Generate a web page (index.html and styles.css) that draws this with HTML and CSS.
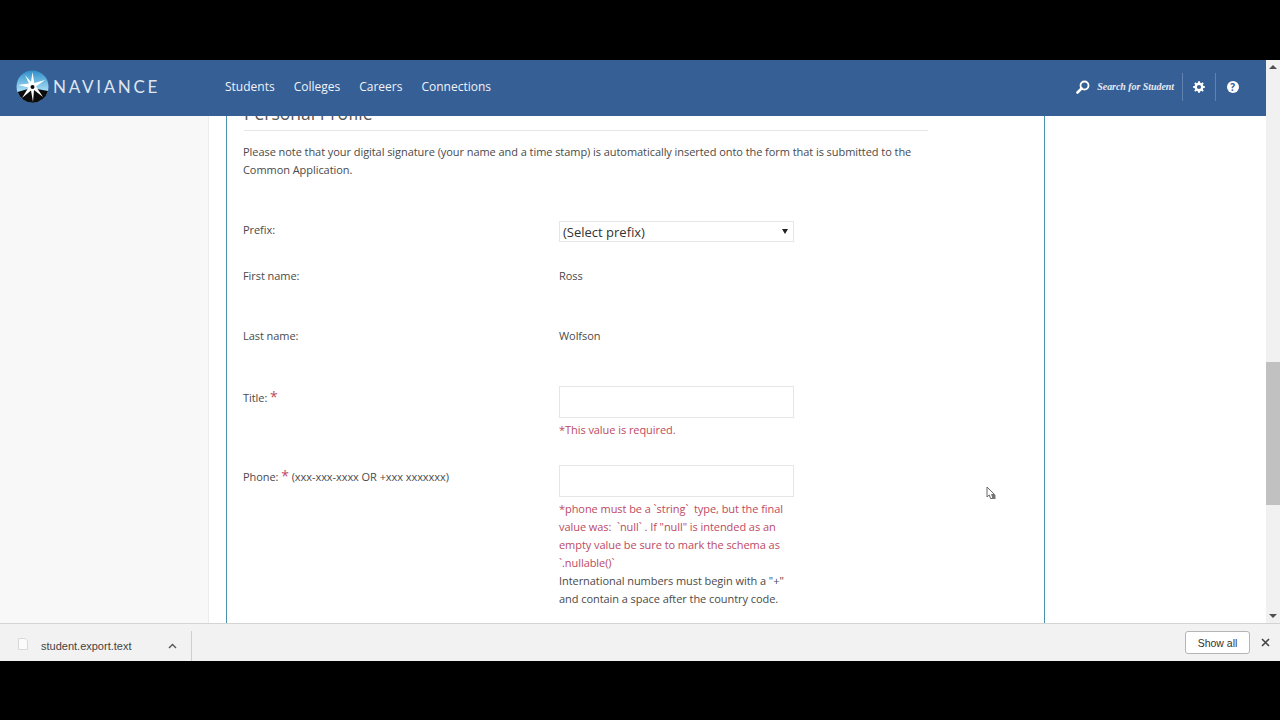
FILE: index.html
```html
<!DOCTYPE html>
<html lang="en">
<head>
    <meta charset="UTF-8">
    <title>Naviance - Personal Profile</title>
    <link rel="stylesheet" href="styles.css">
</head>
<body>
    <div class="band-top"></div>
    <div class="browser">
        <div class="viewport">
            <div class="site">
                <header class="navbar">
                    <a class="logo">
                        <svg class="logo-mark" width="33" height="33" viewBox="0 0 33 33">
                            <defs>
                                <linearGradient id="globe" x1="0" y1="0" x2="0" y2="1">
                                    <stop offset="0" stop-color="#2f8fc9"/>
                                    <stop offset="0.6" stop-color="#9fd8f2"/>
                                </linearGradient>
                            </defs>
                            <circle cx="16.5" cy="16.5" r="16" fill="url(#globe)"/>
                            <path d="M1.5 22 L12 19 L21 19 L32 21 A16 16 0 0 1 1.5 22 Z" fill="#0c0c0c"/>
                            <path d="M16.5 2 L18.3 13 L29 10 L20 16.5 L27 27 L18 20 L17 32 L15 20.5 L6 28 L12.5 17.5 L2 15 L13 13.5 L9 5 L15 12 Z" fill="#fff"/>
                            <circle cx="16.5" cy="17" r="2" fill="#0c0c0c"/>
                        </svg>
                        <span class="logo-text">NAVIANCE</span>
                    </a>
                    <nav class="main-nav">
                        <a>Students</a>
                        <a>Colleges</a>
                        <a>Careers</a>
                        <a>Connections</a>
                    </nav>
                    <div class="nav-tools">
                        <div class="search-student">
                            <svg width="14" height="14" viewBox="0 0 14 14">
                                <circle cx="8.5" cy="5.5" r="4" fill="none" stroke="#fff" stroke-width="1.8"/>
                                <path d="M5.6 8.4 L1.5 12.5" stroke="#fff" stroke-width="2.6" stroke-linecap="round"/>
                            </svg>
                            <span>Search for Student</span>
                        </div>
                        <div class="tool-btn">
                            <svg width="12" height="12" viewBox="0 0 12 12">
                                <circle cx="6" cy="6" r="3.3" fill="none" stroke="#fff" stroke-width="2.4"/>
                                <path d="M6 0.2V2.2M6 9.8V11.8M0.2 6H2.2M9.8 6H11.8M1.9 1.9L3.3 3.3M8.7 8.7L10.1 10.1M1.9 10.1L3.3 8.7M8.7 3.3L10.1 1.9" stroke="#fff" stroke-width="1.9"/>
                            </svg>
                        </div>
                        <div class="tool-btn">
                            <span class="help-icon">?</span>
                        </div>
                    </div>
                </header>

                <main class="page">
                    <div class="side"></div>
                    <div class="content">
                        <section class="panel">
                            <h2>Personal Profile</h2>
                            <p class="note">Please note that your digital signature (your name and a time stamp) is automatically inserted onto the form that is submitted to the Common Application.</p>

                            <div class="row row-prefix">
                                <label>Prefix:</label>
                                <div class="field">
                                    <div class="select-box"><span>(Select prefix)</span><i class="caret"></i></div>
                                </div>
                            </div>
                            <div class="row row-static">
                                <label>First name:</label>
                                <div class="field">Ross</div>
                            </div>
                            <div class="row row-static">
                                <label>Last name:</label>
                                <div class="field">Wolfson</div>
                            </div>
                            <div class="row row-title">
                                <label>Title: <span class="req">*</span></label>
                                <div class="field">
                                    <div class="text-input"></div>
                                    <div class="error">*This value is required.</div>
                                </div>
                            </div>
                            <div class="row row-phone">
                                <label>Phone: <span class="req">*</span> (xxx-xxx-xxxx OR +xxx xxxxxxx)</label>
                                <div class="field">
                                    <div class="text-input"></div>
                                    <div class="error">*phone must be a `string`&nbsp; type, but the final value was:&nbsp; `null` . If "null" is intended as an empty value be sure to mark the schema as `.nullable()`</div>
                                    <div class="hint">International numbers must begin with a "+" and contain a space after the country code.</div>
                                </div>
                            </div>
                        </section>
                        <svg class="cursor" width="10" height="14" viewBox="0 0 10 14">
                            <path d="M1 1 L1 11 L3.2 9 L4.8 12.8 L7 12 L5.6 8.5 L8.6 8.5 Z" fill="#fff" stroke="#666" stroke-width="1"/>
                            <path d="M6 9 L9.5 9 L9.5 13 L6 13 Z" fill="#777"/>
                        </svg>
                    </div>
                </main>
            </div>
            <div class="scrollbar">
                <i class="arrow-up"></i>
                <div class="scroll-track"><div class="scroll-thumb"></div></div>
                <i class="arrow-down"></i>
            </div>
        </div>

        <footer class="downloads">
            <div class="download-item">
                <svg class="file-icon" width="10" height="12" viewBox="0 0 10 12">
                    <path d="M0.5 0.5H7L9.5 3V11.5H0.5Z" fill="#fbfbfb" stroke="#d9d9d9"/>
                </svg>
                <span class="file-name">student.export.text</span>
                <svg class="chevron" width="9" height="6" viewBox="0 0 9 6">
                    <path d="M1 5 L4.5 1.5 L8 5" fill="none" stroke="#555" stroke-width="1.4"/>
                </svg>
            </div>
            <div class="download-actions">
                <button class="show-all">Show all</button>
                <svg class="close-x" width="9" height="9" viewBox="0 0 9 9">
                    <path d="M1 1 L8 8 M8 1 L1 8" stroke="#444" stroke-width="1.6"/>
                </svg>
            </div>
        </footer>
    </div>
    <div class="band-bottom"></div>
</body>
</html>
```

FILE: styles.css
```css
* {
    box-sizing: border-box;
}

html, body {
    margin: 0;
    padding: 0;
    height: 720px;
    overflow: hidden;
    background-color: #000;
}

body {
    font-family: "Open Sans", sans-serif;
    font-size: 11px;
    letter-spacing: -0.06px;
    color: #4a4a4a;
}

.band-top {
    height: 60px;
}

.band-bottom {
    height: 59px;
}

.browser {
    height: 601px;
    display: flex;
    flex-direction: column;
    background-color: #fff;
}

.viewport {
    flex: 1;
    min-height: 0;
    display: flex;
}

.site {
    flex: 1;
    min-width: 0;
    display: flex;
    flex-direction: column;
}

/* top bar */
.navbar {
    height: 56px;
    flex: none;
    display: flex;
    align-items: center;
    background-color: #365f96;
    color: #fff;
    padding-left: 16px;
    padding-right: 17px;
    padding-bottom: 3px;
}

.logo {
    display: flex;
    align-items: center;
    width: 209px;
}

.logo-mark {
    flex: none;
}

.logo-text {
    font-family: "Lato", sans-serif;
    font-size: 17px;
    letter-spacing: 2.7px;
    margin-left: 4px;
    color: #dfe6f0;
}

.main-nav {
    display: flex;
    gap: 19px;
}

.main-nav a {
    font-size: 12px;
    font-weight: 400;
    letter-spacing: 0;
    color: #f0f3f8;
}

.nav-tools {
    margin-left: auto;
    display: flex;
    align-items: center;
}

.search-student {
    display: flex;
    align-items: center;
    gap: 6px;
    padding-right: 8px;
    height: 28px;
    border-right: 1px solid #5f82b0;
}

.search-student svg {
    margin-right: 1px;
}

.search-student span {
    font-family: "Liberation Serif", serif;
    font-style: italic;
    font-weight: bold;
    font-size: 10px;
    color: #e4eaf3;
}

.tool-btn {
    width: 33px;
    height: 28px;
    display: flex;
    align-items: center;
    justify-content: center;
    border-right: 1px solid #5f82b0;
}

.tool-btn:last-child {
    border-right: none;
}

.help-icon {
    width: 12px;
    height: 12px;
    border-radius: 50%;
    background-color: #fff;
    color: #365f96;
    font-size: 10px;
    font-weight: 700;
    line-height: 12px;
    text-align: center;
}

/* page body */
.page {
    flex: 1;
    min-height: 0;
    display: flex;
    overflow: hidden;
}

.side {
    width: 209px;
    flex: none;
    background-color: #f8f8f8;
    border-right: 1px solid #ececec;
}

.content {
    flex: 1;
    padding-left: 17px;
    position: relative;
}

.panel {
    display: flow-root;
    width: 819px;
    height: 100%;
    border-left: 1px solid #4b93ad;
    border-right: 1px solid #4b93ad;
    padding-left: 16px;
}

.panel h2 {
    width: 684px;
    margin: -15px 0 0 1px;
    height: 30px;
    font-size: 17.5px;
    font-weight: 400;
    line-height: 24px;
    letter-spacing: 0;
    color: #555;
    border-bottom: 1px solid #e6e6e6;
}

.note {
    width: 685px;
    margin: 12px 0 0 0;
    line-height: 18px;
}

.row {
    display: flex;
}

.row label {
    width: 316px;
    flex: none;
}

.field {
    width: 235px;
    line-height: 18px;
}

.row-prefix {
    margin-top: 42px;
    height: 46px;
}

.row-prefix label {
    line-height: 17px;
}

.row-static {
    height: 60px;
}

.row-static label,
.row-static .field {
    line-height: 17px;
}

.row-title {
    height: 79px;
    margin-top: -1px;
}

.row-title label,
.row-phone label {
    padding-top: 3px;
    line-height: 18px;
}

.select-box {
    height: 21px;
    border: 1px solid #e6e6e6;
    display: flex;
    align-items: center;
    justify-content: space-between;
    padding: 0 5px 0 3px;
    font-size: 13px;
    letter-spacing: 0;
    color: #333;
    background-color: #fff;
}

.caret {
    width: 0;
    height: 0;
    border-left: 3px solid transparent;
    border-right: 3px solid transparent;
    border-top: 5px solid #222;
}

.text-input {
    height: 32px;
    border: 1px solid #e6e6e6;
    background-color: #fff;
    margin-bottom: 3px;
}

.error {
    color: #bd4a62;
}

.req {
    color: #bd4a62;
    font-size: 14px;
    line-height: 12px;
}

.cursor {
    position: absolute;
    left: 777px;
    top: 370px;
}

/* fake scrollbar */
.scrollbar {
    width: 14px;
    flex: none;
    display: flex;
    flex-direction: column;
    align-items: center;
    background-color: #f1f1f1;
}

.scroll-track {
    flex: 1;
    width: 100%;
    padding-top: 288px;
}

.scroll-thumb {
    height: 143px;
    background-color: #c1c1c1;
}

.arrow-up,
.arrow-down {
    flex: none;
    width: 0;
    height: 0;
    margin: 5px 0;
    border-left: 4px solid transparent;
    border-right: 4px solid transparent;
}

.arrow-up {
    border-bottom: 4px solid #505050;
}

.arrow-down {
    border-top: 4px solid #505050;
}

/* chrome download shelf */
.downloads {
    height: 38px;
    flex: none;
    display: flex;
    align-items: center;
    justify-content: space-between;
    background-color: #f2f2f2;
    border-top: 1px solid #d4d4d4;
}

.download-item {
    width: 192px;
    height: 30px;
    margin-top: 6px;
    display: flex;
    align-items: center;
    border-right: 1px solid #cfcfcf;
    padding-left: 18px;
}

.file-icon {
    margin-bottom: 3px;
}

.file-name {
    font-family: "Liberation Sans", sans-serif;
    font-size: 11px;
    letter-spacing: 0;
    margin-left: 13px;
    color: #444;
    width: 127px;
    padding-top: 1px;
}

.download-actions {
    display: flex;
    align-items: center;
    padding-right: 10px;
}

.show-all {
    width: 65px;
    height: 23px;
    padding: 0;
    font-family: "Liberation Sans", sans-serif;
    font-size: 10.5px;
    color: #333;
    background-color: #fff;
    border: 1px solid #b5b5b5;
    border-radius: 3px;
}

.close-x {
    margin-left: 11px;
}
```
